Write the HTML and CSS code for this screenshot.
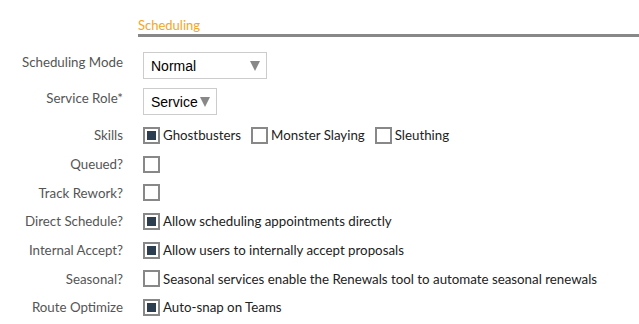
FILE: index.html
```html
<!DOCTYPE html>
<html lang="en">
<head>
    <meta charset="UTF-8">
    <title>Service - Scheduling</title>
    <link rel="stylesheet" href="styles.css">
</head>
<body>

    <div class="section-head">
        <h3>Scheduling</h3>
    </div>

    <div class="form">
        <div class="row row-select first">
            <label>Scheduling Mode</label>
            <div class="select wide">Normal<span class="arrow"></span></div>
        </div>
        <div class="row row-select">
            <label>Service Role*</label>
            <div class="select">Service<span class="arrow"></span></div>
        </div>
        <div class="row">
            <label>Skills</label>
            <div class="opts">
                <span class="opt"><span class="box checked"></span>Ghostbusters</span>
                <span class="opt"><span class="box"></span>Monster Slaying</span>
                <span class="opt"><span class="box"></span>Sleuthing</span>
            </div>
        </div>
        <div class="row">
            <label>Queued?</label>
            <div class="opts"><span class="box"></span></div>
        </div>
        <div class="row">
            <label>Track Rework?</label>
            <div class="opts"><span class="box"></span></div>
        </div>
        <div class="row">
            <label>Direct Schedule?</label>
            <div class="opts"><span class="opt"><span class="box checked"></span>Allow scheduling appointments directly</span></div>
        </div>
        <div class="row">
            <label>Internal Accept?</label>
            <div class="opts"><span class="opt"><span class="box checked"></span>Allow users to internally accept proposals</span></div>
        </div>
        <div class="row">
            <label>Seasonal?</label>
            <div class="opts"><span class="opt"><span class="box"></span>Seasonal services enable the Renewals tool to automate seasonal renewals</span></div>
        </div>
        <div class="row">
            <label>Route Optimize</label>
            <div class="opts"><span class="opt"><span class="box checked"></span>Auto-snap on Teams</span></div>
        </div>
    </div>

</body>
</html>
```

FILE: styles.css
```css
body {
    margin: 0;
    font-family: Lato, "Noto Sans", sans-serif;
    font-size: 13.3px;
    color: #222;
    background: #fff;
}
.section-head {
    margin-left: 138px;
    padding-top: 17px;
    border-bottom: 3px solid #888;
}
.section-head h3 {
    margin: 0;
    padding-bottom: 1px;
    font-size: 13px;
    font-weight: normal;
    color: #f5a623;
}
.form {
    padding-top: 15px;
}
.row {
    display: grid;
    grid-template-columns: 123px 1fr;
    column-gap: 20px;
    align-items: center;
    height: 28.7px;
}
.row-select {
    height: 36px;
}
.row-select + .row-select {
    height: 33px;
}
.row label {
    text-align: right;
    color: #555;
}
.row-select label {
    align-self: start;
    padding-top: 2px;
}
.select {
    position: relative;
    box-sizing: border-box;
    height: 27px;
    width: 74px;
    padding: 5px 8px 0 7px;
    border: 1px solid #ccc;
    font-family: "Liberation Sans", Arial, sans-serif;
    font-size: 14px;
    color: #000;
    align-self: start;
}
.select.wide {
    width: 124px;
}
.arrow {
    position: absolute;
    right: 6px;
    top: 8px;
    width: 0;
    height: 0;
    border-left: 5px solid transparent;
    border-right: 5px solid transparent;
    border-top: 10px solid #888;
}
.opts {
    display: flex;
    align-items: center;
    gap: 10px;
}
.opt {
    display: flex;
    align-items: center;
    gap: 3px;
}
.box {
    box-sizing: border-box;
    width: 17px;
    height: 17px;
    border: 2px solid #888;
    background: #fff;
    display: flex;
    align-items: center;
    justify-content: center;
}
.box.checked::after {
    content: "";
    width: 9px;
    height: 9px;
    background: #2c3e50;
}
```
